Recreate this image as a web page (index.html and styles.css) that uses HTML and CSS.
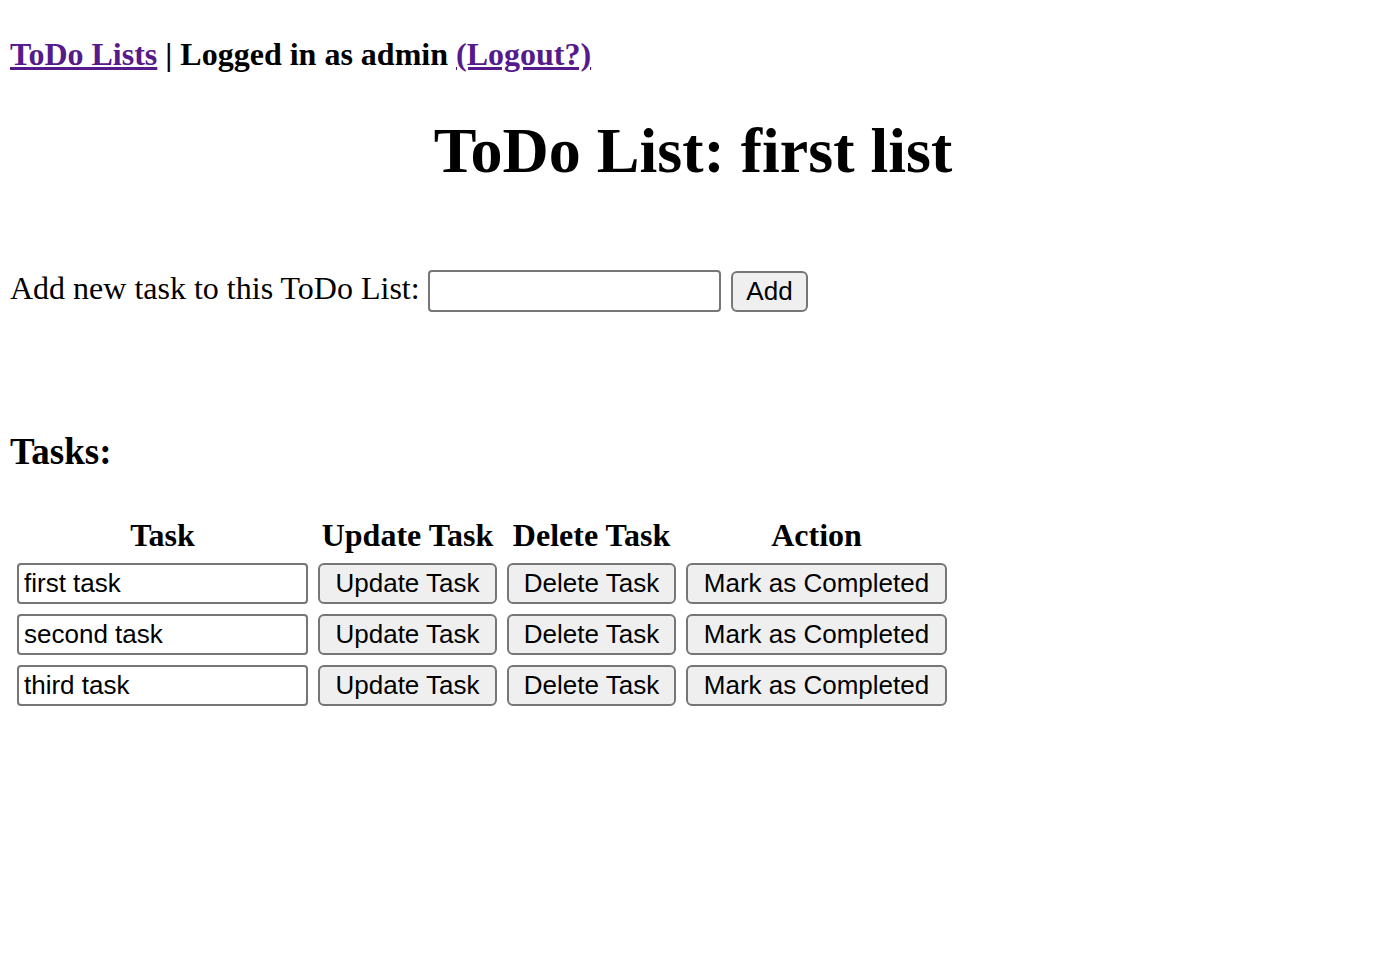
FILE: index.html
```html
<!DOCTYPE html>
<html>
<head>
<meta charset="utf-8">
<title>ToDo List: first list</title>
<link rel="stylesheet" href="styles.css">
</head>
<body>
<p class="topline"><a href="#">ToDo Lists</a> | Logged in as admin <a href="#">(Logout?)</a></p>
<h1 class="title">ToDo List: first list</h1>
<form class="addrow">
  <label class="addlabel" for="newtask">Add new task to this ToDo List:</label>
  <input class="field addfield" id="newtask" type="text">
  <button class="btn addbtn" type="button">Add</button>
</form>
<h3 class="tasks-title">Tasks:</h3>
<table class="tasks">
  <thead>
    <tr><th>Task</th><th>Update Task</th><th>Delete Task</th><th>Action</th></tr>
  </thead>
  <tbody>
    <tr>
      <td><input class="field taskfield" type="text" value="first task"></td>
      <td><button class="btn upd" type="button">Update Task</button></td>
      <td><button class="btn del" type="button">Delete Task</button></td>
      <td><button class="btn mark" type="button">Mark as Completed</button></td>
    </tr>
    <tr>
      <td><input class="field taskfield" type="text" value="second task"></td>
      <td><button class="btn upd" type="button">Update Task</button></td>
      <td><button class="btn del" type="button">Delete Task</button></td>
      <td><button class="btn mark" type="button">Mark as Completed</button></td>
    </tr>
    <tr>
      <td><input class="field taskfield" type="text" value="third task"></td>
      <td><button class="btn upd" type="button">Update Task</button></td>
      <td><button class="btn del" type="button">Delete Task</button></td>
      <td><button class="btn mark" type="button">Mark as Completed</button></td>
    </tr>
  </tbody>
</table>
</body>
</html>
```
FILE: styles.css
```css
html, body {
  margin: 0;
  padding: 0;
  background: #ffffff;
}
body {
  padding: 0 10px;
  font-family: "Liberation Serif", "Times New Roman", serif;
  color: #000000;
}
.topline {
  margin: 34px 0 0 0;
  font-size: 32px;
  line-height: 40px;
  font-weight: bold;
}
.topline a {
  color: #551a8b;
  text-decoration: underline;
}
.title {
  margin: 37px 0 0 0;
  font-size: 64px;
  line-height: 80px;
  font-weight: bold;
  text-align: center;
}
.addrow {
  margin: 79px 0 0 0;
  display: flex;
  align-items: flex-start;
}
.addlabel {
  font-size: 32px;
  line-height: 36px;
  width: 418px;
  white-space: nowrap;
  flex-shrink: 0;
}
.field {
  box-sizing: border-box;
  border: 2px solid #767676;
  border-radius: 4px;
  background: #ffffff;
  font-family: "Liberation Sans", Arial, sans-serif;
  font-size: 26px;
  color: #000000;
  padding: 0 5px;
  margin: 0;
  outline: none;
}
.addfield {
  width: 293px;
  height: 42px;
}
.btn {
  box-sizing: border-box;
  border: 2px solid #767676;
  border-radius: 6px;
  background: #efefef;
  font-family: "Liberation Sans", Arial, sans-serif;
  font-size: 26px;
  color: #000000;
  padding: 0;
  margin: 0;
  height: 41px;
  text-align: center;
}
.addbtn {
  width: 77px;
  margin-left: 10px;
  margin-top: 1px;
}
.tasks-title {
  margin: 118px 0 0 0;
  font-size: 37px;
  line-height: 44px;
  font-weight: bold;
}
.tasks {
  margin: 43px 0 0 2px;
  border-collapse: separate;
  border-spacing: 0;
}
.tasks th {
  font-size: 32px;
  line-height: 36px;
  font-weight: bold;
  padding: 0 5px 5px 5px;
  text-align: center;
  white-space: nowrap;
}
.tasks td {
  padding: 5px;
}
.taskfield {
  width: 291px;
  height: 41px;
  display: block;
}
.upd {
  width: 179px;
  display: block;
}
.del {
  width: 169px;
  display: block;
}
.mark {
  width: 261px;
  display: block;
}
```
